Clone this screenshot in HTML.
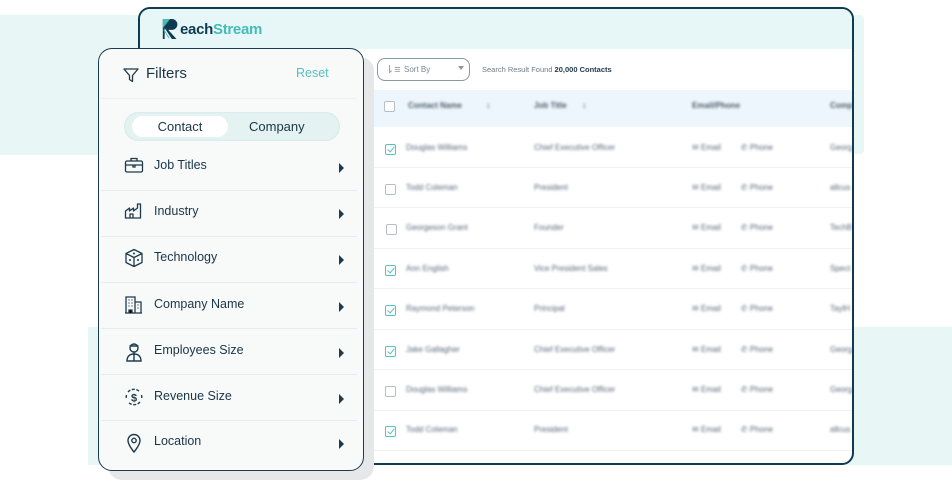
<!DOCTYPE html>
<html><head><meta charset="utf-8"><style>
*{box-sizing:border-box;margin:0;padding:0}
body{width:952px;height:483px;background:#fff;position:relative;overflow:hidden;font-family:"Liberation Sans",sans-serif;color:#1e3a4c}
.band{position:absolute;background:#e8f6f5}
#win{position:absolute;left:138px;top:7px;width:716px;height:458px;border:2px solid #0e3a52;border-radius:12px;background:#fff;overflow:hidden}
#hdr{position:absolute;left:0;top:0;right:0;height:40px;background:#e7f6f6}
.logo{position:absolute;left:22px;top:12px;font-size:15px;font-weight:bold;letter-spacing:-0.3px}
.sort{position:absolute;left:237px;top:49px;width:93px;height:23px;border:1px solid #8a99a4;border-radius:8px;font-size:8px;color:#7a8894;padding:6px 0 0 26px}
.sres{position:absolute;left:342px;top:56px;font-size:7.5px;color:#6d7d88}
.thead{position:absolute;left:234px;top:81px;right:0;height:37px;background:#edf6fc}
.blur{filter:blur(1.3px);color:#58687a;font-size:8px;position:absolute;white-space:nowrap}
.cb{position:absolute;width:11px;height:11px;border:1px solid #b7bec4;border-radius:2px;background:#fff}
.cb.on{border-color:#54c3c3}
.cb.on::after{content:"";position:absolute;left:3px;top:0px;width:3px;height:6px;border:solid #54c3c3;border-width:0 1.5px 1.5px 0;transform:rotate(40deg)}
.rowline{position:absolute;left:234px;right:0;height:1px;background:#f1f2f3}
#panel{position:absolute;left:98px;top:48px;width:266px;height:423px;border:1.5px solid #1a3c50;border-radius:14px;background:#f8f9f9;box-shadow:10px 9px 0 #e6e7e8}
.ptitle{position:absolute;left:47px;top:16px;font-size:15px;color:#1a3547}
.reset{position:absolute;left:197px;top:17px;font-size:12.5px;color:#56c0bd}
.tog{position:absolute;left:25px;top:63px;width:216px;height:29px;border-radius:15px;background:#e4f2f2;box-shadow:inset 0 0 2px #c8dede}
.tog .a{position:absolute;left:8px;top:4px;width:96px;height:21px;border-radius:11px;background:#fff;font-size:13px;text-align:center;line-height:21px;color:#1a3547}
.tog .b{position:absolute;left:125px;top:4px;font-size:13px;line-height:21px;color:#1a3547}
.item{position:absolute;left:0;width:258px;height:20px;font-size:12.5px;color:#1a3547}
.item span{position:absolute;left:55px;top:0}
.item svg{position:absolute;left:25px;top:-2px}
.item .arr{position:absolute;left:240px;top:5px;width:0;height:0;border-left:5px solid #1e3a4c;border-top:5px solid transparent;border-bottom:5px solid transparent}
.div{position:absolute;left:2px;width:256px;height:1px;background:#e9ecee}
</style></head><body>
<div class="band" style="left:0;top:15px;width:140px;height:140px"></div>
<div class="band" style="left:852px;top:15px;width:12px;height:139px;border-radius:0 4px 4px 0"></div>
<div class="band" style="left:88px;top:327px;width:864px;height:138px"></div>

<div id="win">
 <div id="hdr"></div>
 <svg style="position:absolute;left:21px;top:8px" width="20" height="24" viewBox="0 0 22 26"><path d="M2 2h10a6 6 0 0 1 0 12h-4l9 10h-5L4 12v12H2z" fill="#0e3a52"/><path d="M2 2h8L2 12z" fill="#45bcb8"/><path d="M3 14l6 9" stroke="#45bcb8" stroke-width="1"/></svg>
 <div class="logo" style="left:40px"><span style="color:#0e3a52">each</span><span style="color:#45bcb8">Stream</span></div>
 <div class="sort">Sort By<span style="position:absolute;left:7px;top:4px;font-size:11px;color:#8a99a4">⇂≡</span><span style="position:absolute;right:5px;top:7px;border-top:4px solid #8a99a4;border-left:3px solid transparent;border-right:3px solid transparent"></span></div>
 <div class="sres">Search Result Found <b style="color:#1e3a4c">20,000 Contacts</b></div>
 <div class="thead"></div>
 <div class="cb" style="left:244px;top:92px"></div>
 <div class="blur" style="left:268px;top:92px;color:#4a5a68;font-weight:bold">Contact Name &nbsp; &nbsp; &nbsp; &nbsp; &nbsp; ↕</div>
 <div class="blur" style="left:394px;top:92px;color:#4a5a68;font-weight:bold">Job Title &nbsp; &nbsp; &nbsp; ↕</div>
 <div class="blur" style="left:552px;top:92px;color:#4a5a68;font-weight:bold">Email/Phone</div>
 <div class="blur" style="left:690px;top:92px;color:#4a5a68;font-weight:bold">Comp</div>

 <div class="cb on" style="left:245px;top:135px"></div><div class="blur" style="left:266px;top:134px">Douglas Williams</div><div class="blur" style="left:394px;top:134px">Chief Executive Officer</div><div class="blur" style="left:552px;top:134px">✉ Email &nbsp; &nbsp; &nbsp; &nbsp; ✆ Phone</div><div class="blur" style="left:690px;top:134px">Georg</div><div class="rowline" style="top:158px"></div>
 <div class="cb" style="left:245px;top:175px"></div><div class="blur" style="left:266px;top:174px">Todd Coleman</div><div class="blur" style="left:394px;top:174px">President</div><div class="blur" style="left:552px;top:174px">✉ Email &nbsp; &nbsp; &nbsp; &nbsp; ✆ Phone</div><div class="blur" style="left:690px;top:174px">allcus</div><div class="rowline" style="top:198px"></div>
 <div class="cb" style="left:246px;top:215px"></div><div class="blur" style="left:266px;top:214px">Georgeson Grant</div><div class="blur" style="left:394px;top:214px">Founder</div><div class="blur" style="left:552px;top:214px">✉ Email &nbsp; &nbsp; &nbsp; &nbsp; ✆ Phone</div><div class="blur" style="left:690px;top:214px">TechB</div><div class="rowline" style="top:239px"></div>
 <div class="cb on" style="left:245px;top:256px"></div><div class="blur" style="left:266px;top:255px">Ann English</div><div class="blur" style="left:394px;top:255px">Vice President Sales</div><div class="blur" style="left:552px;top:255px">✉ Email &nbsp; &nbsp; &nbsp; &nbsp; ✆ Phone</div><div class="blur" style="left:690px;top:255px">Spect</div><div class="rowline" style="top:279px"></div>
 <div class="cb on" style="left:245px;top:296px"></div><div class="blur" style="left:266px;top:295px">Raymond Peterson</div><div class="blur" style="left:394px;top:295px">Principal</div><div class="blur" style="left:552px;top:295px">✉ Email &nbsp; &nbsp; &nbsp; &nbsp; ✆ Phone</div><div class="blur" style="left:690px;top:295px">TaylH</div><div class="rowline" style="top:320px"></div>
 <div class="cb on" style="left:245px;top:337px"></div><div class="blur" style="left:266px;top:336px">Jake Gallagher</div><div class="blur" style="left:394px;top:336px">Chief Executive Officer</div><div class="blur" style="left:552px;top:336px">✉ Email &nbsp; &nbsp; &nbsp; &nbsp; ✆ Phone</div><div class="blur" style="left:690px;top:336px">Georg</div><div class="rowline" style="top:360px"></div>
 <div class="cb" style="left:245px;top:377px"></div><div class="blur" style="left:266px;top:376px">Douglas Williams</div><div class="blur" style="left:394px;top:376px">Chief Executive Officer</div><div class="blur" style="left:552px;top:376px">✉ Email &nbsp; &nbsp; &nbsp; &nbsp; ✆ Phone</div><div class="blur" style="left:690px;top:376px">Georg</div><div class="rowline" style="top:401px"></div>
 <div class="cb on" style="left:245px;top:417px"></div><div class="blur" style="left:266px;top:416px">Todd Coleman</div><div class="blur" style="left:394px;top:416px">President</div><div class="blur" style="left:552px;top:416px">✉ Email &nbsp; &nbsp; &nbsp; &nbsp; ✆ Phone</div><div class="blur" style="left:690px;top:416px">allcus</div><div class="rowline" style="top:441px"></div>
</div>

<svg style="position:absolute;left:352px;top:87px" width="26" height="28" viewBox="0 0 26 28"><path d="M3 3l17 13-7 1 4 7-3 2-4-7-5 5z" fill="#fff" stroke="#0e3a52" stroke-width="2" stroke-linejoin="round"/></svg>

<div id="panel">
 <svg style="position:absolute;left:24px;top:18px" width="16" height="16" viewBox="0 0 16 16"><path d="M1 2h14l-5.5 6.5v6l-3-2v-4z" fill="none" stroke="#1e3a4c" stroke-width="1.3" stroke-linejoin="round"/></svg>
 <div class="ptitle">Filters</div>
 <div class="reset">Reset</div>
 <div class="div" style="top:49px;background:#eef0f1"></div>
 <div class="tog"><div class="a">Contact</div><div class="b">Company</div></div>

 <div class="item" style="top:109px"><svg width="20" height="18" viewBox="0 0 20 18"><rect x="1.5" y="5" width="17" height="11" rx="1.5" fill="none" stroke="#1e3a4c" stroke-width="1.3"/><path d="M7 5V2.5h6V5M1.5 9h17M9 9v2h2V9" fill="none" stroke="#1e3a4c" stroke-width="1.3"/></svg><span>Job Titles</span><div class="arr"></div></div>
 <div class="div" style="top:141px"></div>
 <div class="item" style="top:155px"><svg width="20" height="18" viewBox="0 0 20 18"><path d="M1.5 16V9l4-3v3l4-3v3l4-3V2h3v14zM6 16v-4h3v4" fill="none" stroke="#1e3a4c" stroke-width="1.3" stroke-linejoin="round"/></svg><span>Industry</span><div class="arr"></div></div>
 <div class="div" style="top:187px"></div>
 <div class="item" style="top:201px"><svg width="20" height="20" viewBox="0 0 20 20"><path d="M10 1.5l8 4v9l-8 4-8-4v-9zM2 5.5l8 4 8-4M10 9.5v9" fill="none" stroke="#1e3a4c" stroke-width="1.3" stroke-linejoin="round"/><circle cx="6" cy="12" r="1" fill="#1e3a4c"/><circle cx="14" cy="12" r="1" fill="#1e3a4c"/><circle cx="10" cy="5.5" r="1" fill="#1e3a4c"/></svg><span>Technology</span><div class="arr"></div></div>
 <div class="div" style="top:233px"></div>
 <div class="item" style="top:248px"><svg width="20" height="20" viewBox="0 0 20 20"><path d="M2 18V2h9v16M11 7h6v11M1 18h17" fill="none" stroke="#1e3a4c" stroke-width="1.3"/><path d="M4.5 5h1M7.5 5h1M4.5 8h1M7.5 8h1M4.5 11h1M7.5 11h1M5 18v-3h3v3M13.5 10h1M13.5 13h1" stroke="#1e3a4c" stroke-width="1.3"/></svg><span>Company Name</span><div class="arr"></div></div>
 <div class="div" style="top:279px"></div>
 <div class="item" style="top:294px"><svg width="20" height="22" viewBox="0 0 20 22"><circle cx="10" cy="7" r="4" fill="none" stroke="#1e3a4c" stroke-width="1.4"/><path d="M5.5 5h9M10 11v9M3 20c0-5 3-7 7-7s7 2 7 7z" fill="none" stroke="#1e3a4c" stroke-width="1.4"/></svg><span>Employees Size</span><div class="arr"></div></div>
 <div class="div" style="top:325px"></div>
 <div class="item" style="top:340px"><svg width="20" height="20" viewBox="0 0 20 20"><path d="M4 5a8 8 0 0 1 12 0M16 15a8 8 0 0 1-12 0M2.5 8a8 8 0 0 0 0 4M17.5 8a8 8 0 0 1 0 4" fill="none" stroke="#1e3a4c" stroke-width="1.4" stroke-dasharray="3 1.5"/><text x="10" y="14.5" font-size="11" font-weight="bold" text-anchor="middle" fill="#1e3a4c" font-family="Liberation Sans">$</text></svg><span>Revenue Size</span><div class="arr"></div></div>
 <div class="div" style="top:371px"></div>
 <div class="item" style="top:385px"><svg width="20" height="22" viewBox="0 0 20 22"><path d="M10 20s-6-7-6-11.5a6 6 0 0 1 12 0C16 13 10 20 10 20z" fill="none" stroke="#1e3a4c" stroke-width="1.4"/><circle cx="10" cy="8.5" r="2.2" fill="none" stroke="#1e3a4c" stroke-width="1.4"/></svg><span>Location</span><div class="arr"></div></div>
</div>
</body></html>
